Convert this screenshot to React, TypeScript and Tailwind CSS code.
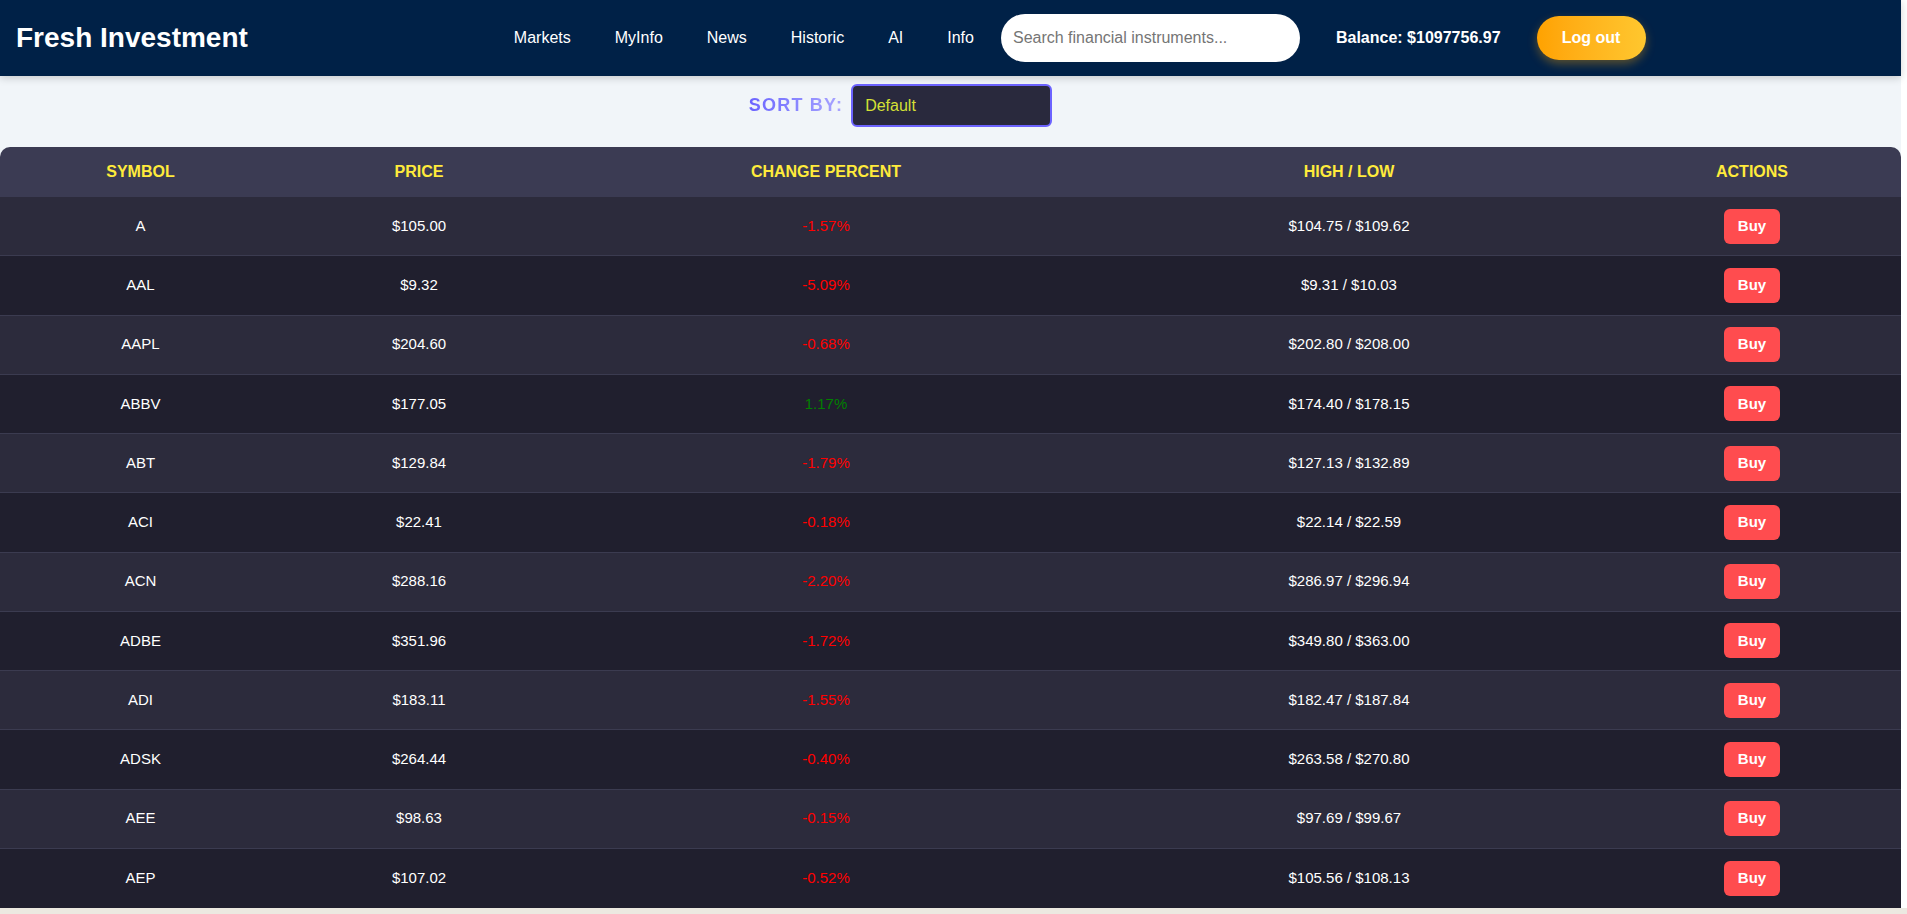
import React from "react";

type Stock = {
  symbol: string;
  price: string;
  change: number;
  high: string;
  low: string;
};

const stocks: Stock[] = [
  { symbol: "A", price: "$105.00", change: -1.57, low: "$104.75", high: "$109.62" },
  { symbol: "AAL", price: "$9.32", change: -5.09, low: "$9.31", high: "$10.03" },
  { symbol: "AAPL", price: "$204.60", change: -0.68, low: "$202.80", high: "$208.00" },
  { symbol: "ABBV", price: "$177.05", change: 1.17, low: "$174.40", high: "$178.15" },
  { symbol: "ABT", price: "$129.84", change: -1.79, low: "$127.13", high: "$132.89" },
  { symbol: "ACI", price: "$22.41", change: -0.18, low: "$22.14", high: "$22.59" },
  { symbol: "ACN", price: "$288.16", change: -2.2, low: "$286.97", high: "$296.94" },
  { symbol: "ADBE", price: "$351.96", change: -1.72, low: "$349.80", high: "$363.00" },
  { symbol: "ADI", price: "$183.11", change: -1.55, low: "$182.47", high: "$187.84" },
  { symbol: "ADSK", price: "$264.44", change: -0.4, low: "$263.58", high: "$270.80" },
  { symbol: "AEE", price: "$98.63", change: -0.15, low: "$97.69", high: "$99.67" },
  { symbol: "AEP", price: "$107.02", change: -0.52, low: "$105.56", high: "$108.13" },
];

const navLinks = ["Markets", "MyInfo", "News", "Historic", "AI", "Info"];

const Navbar: React.FC = () => {
  return (
    <header className="relative z-10 flex h-[76px] items-center bg-[#002147] px-4 shadow-[0_2px_8px_rgba(0,0,0,0.18)]">
      <h1 className="text-[28px] font-bold text-white">Fresh Investment</h1>

      <nav className="ml-[266px] flex items-center gap-[44px] text-base text-white">
        {navLinks.map((link) => (
          <a key={link} href="#" className="hover:text-gray-200">
            {link}
          </a>
        ))}
      </nav>

      <input
        type="text"
        placeholder="Search financial instruments..."
        className="ml-[27px] h-12 w-[299px] rounded-full bg-white px-3 text-base text-gray-800 outline-none placeholder:text-[#757575]"
      />

      <span className="ml-9 text-base font-bold text-white">Balance: $1097756.97</span>

      <button className="ml-9 h-11 w-[109px] rounded-full bg-gradient-to-r from-[#ffa200] to-[#ffc72e] text-base font-bold text-white shadow-[0_4px_10px_rgba(255,165,0,0.35)]">
        Log out
      </button>
    </header>
  );
};

const cols = "grid grid-cols-[281px_276px_538px_508px_1fr] items-center text-center";

const App: React.FC = () => {
  const [sortBy, setSortBy] = React.useState("default");

  return (
    <div className="h-screen overflow-hidden bg-[#ece9e1] font-['Liberation_Sans',Arial,sans-serif]">
      <div className="h-[908px] border-r-[6px] border-white bg-[#f1f5f9]">
        <Navbar />

        {/* Sort controls */}
        <div className="flex h-[71px] items-start justify-center pr-[100px] pt-2">
          <div className="flex items-center">
            <span className="mr-2 bg-gradient-to-r from-[#6c63ff] to-[#aaa5ff] bg-clip-text text-[18px] font-bold tracking-[1.2px] text-transparent">
              SORT BY:
            </span>
            <select
              value={sortBy}
              onChange={(e) => setSortBy(e.target.value)}
              className="h-[43px] w-[201px] appearance-none rounded-md border-2 border-[#6c63ff] bg-[#29293d] px-3 text-base text-[#d4e035] outline-none"
            >
              <option value="default">Default</option>
              <option value="symbol">Symbol</option>
              <option value="price">Price</option>
              <option value="change">Change Percent</option>
            </select>
          </div>
        </div>

        {/* Stock table */}
        <div className="overflow-hidden rounded-t-[10px]">
          <div className={`${cols} h-[50px] bg-[#3b3b53] text-base font-bold uppercase text-[#ffeb3b]`}>
            <div>Symbol</div>
            <div>Price</div>
            <div>Change Percent</div>
            <div>High / Low</div>
            <div>Actions</div>
          </div>

          {stocks.map((s, i) => (
            <div
              key={s.symbol}
              className={`${cols} h-[59.25px] text-[15px] text-white ${
                i % 2 === 0 ? "bg-[#2c2b3c]" : "bg-[#201f2e]"
              } ${i < stocks.length - 1 ? "border-b border-[#3b3b50]" : ""}`}
            >
              <div>{s.symbol}</div>
              <div>{s.price}</div>
              <div className={s.change >= 0 ? "text-[green]" : "text-[red]"}>
                {s.change.toFixed(2)}%
              </div>
              <div>
                {s.low} / {s.high}
              </div>
              <div>
                <button className="h-[35px] w-[56px] rounded-md bg-[#ff4c4f] text-[15px] font-bold text-white">
                  Buy
                </button>
              </div>
            </div>
          ))}
        </div>
      </div>
    </div>
  );
};

export default App;
